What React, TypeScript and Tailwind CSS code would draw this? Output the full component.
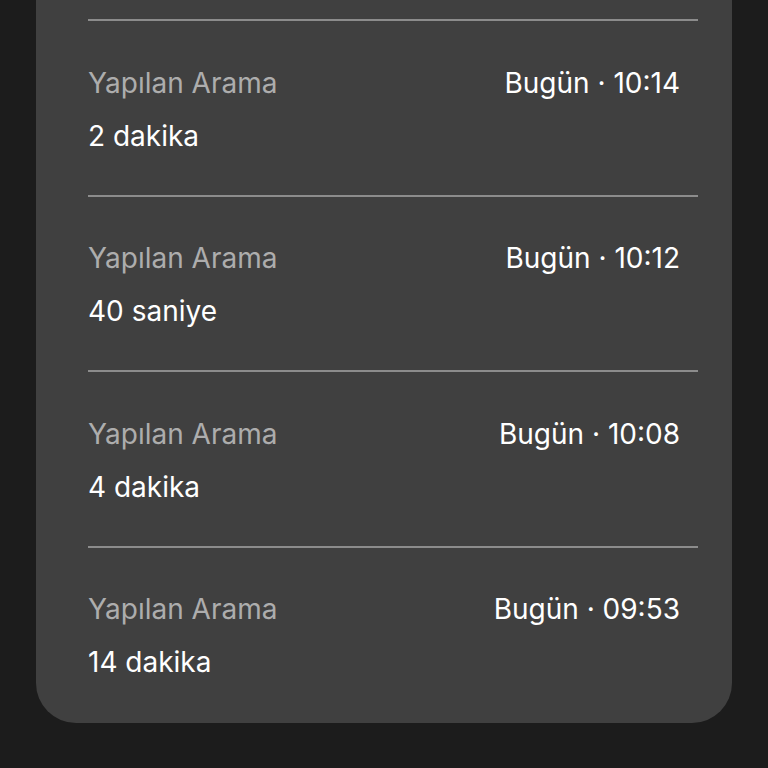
const calls = [
  { time: "Bugün · 10:14", duration: "2 dakika" },
  { time: "Bugün · 10:12", duration: "40 saniye" },
  { time: "Bugün · 10:08", duration: "4 dakika" },
  { time: "Bugün · 09:53", duration: "14 dakika" },
];

function CallRow({ time, duration }: { time: string; duration: string }) {
  return (
    <div>
      <div className="h-[2px] bg-[#8c8c8c]" />
      <div className="pt-[35px] pb-[32.5px] pr-[18px]">
        <div className="flex items-center justify-between h-[53px]">
          <span className="text-[#adadad]">Yapılan Arama</span>
          <span className="text-white">{time}</span>
        </div>
        <div className="flex items-center h-[53px] text-white">{duration}</div>
      </div>
    </div>
  );
}

export default function App() {
  return (
    <div
      className="min-h-[768px] bg-[#1c1c1c] px-[36px] text-[28px]"
      style={{ fontFamily: "Inter, 'Noto Sans', sans-serif" }}
    >
      <div className="bg-[#404040] rounded-b-[40px] pt-[19px] pb-[2px] pl-[52px] pr-[34px]">
        {calls.map((c) => (
          <CallRow key={c.time} time={c.time} duration={c.duration} />
        ))}
      </div>
    </div>
  );
}
